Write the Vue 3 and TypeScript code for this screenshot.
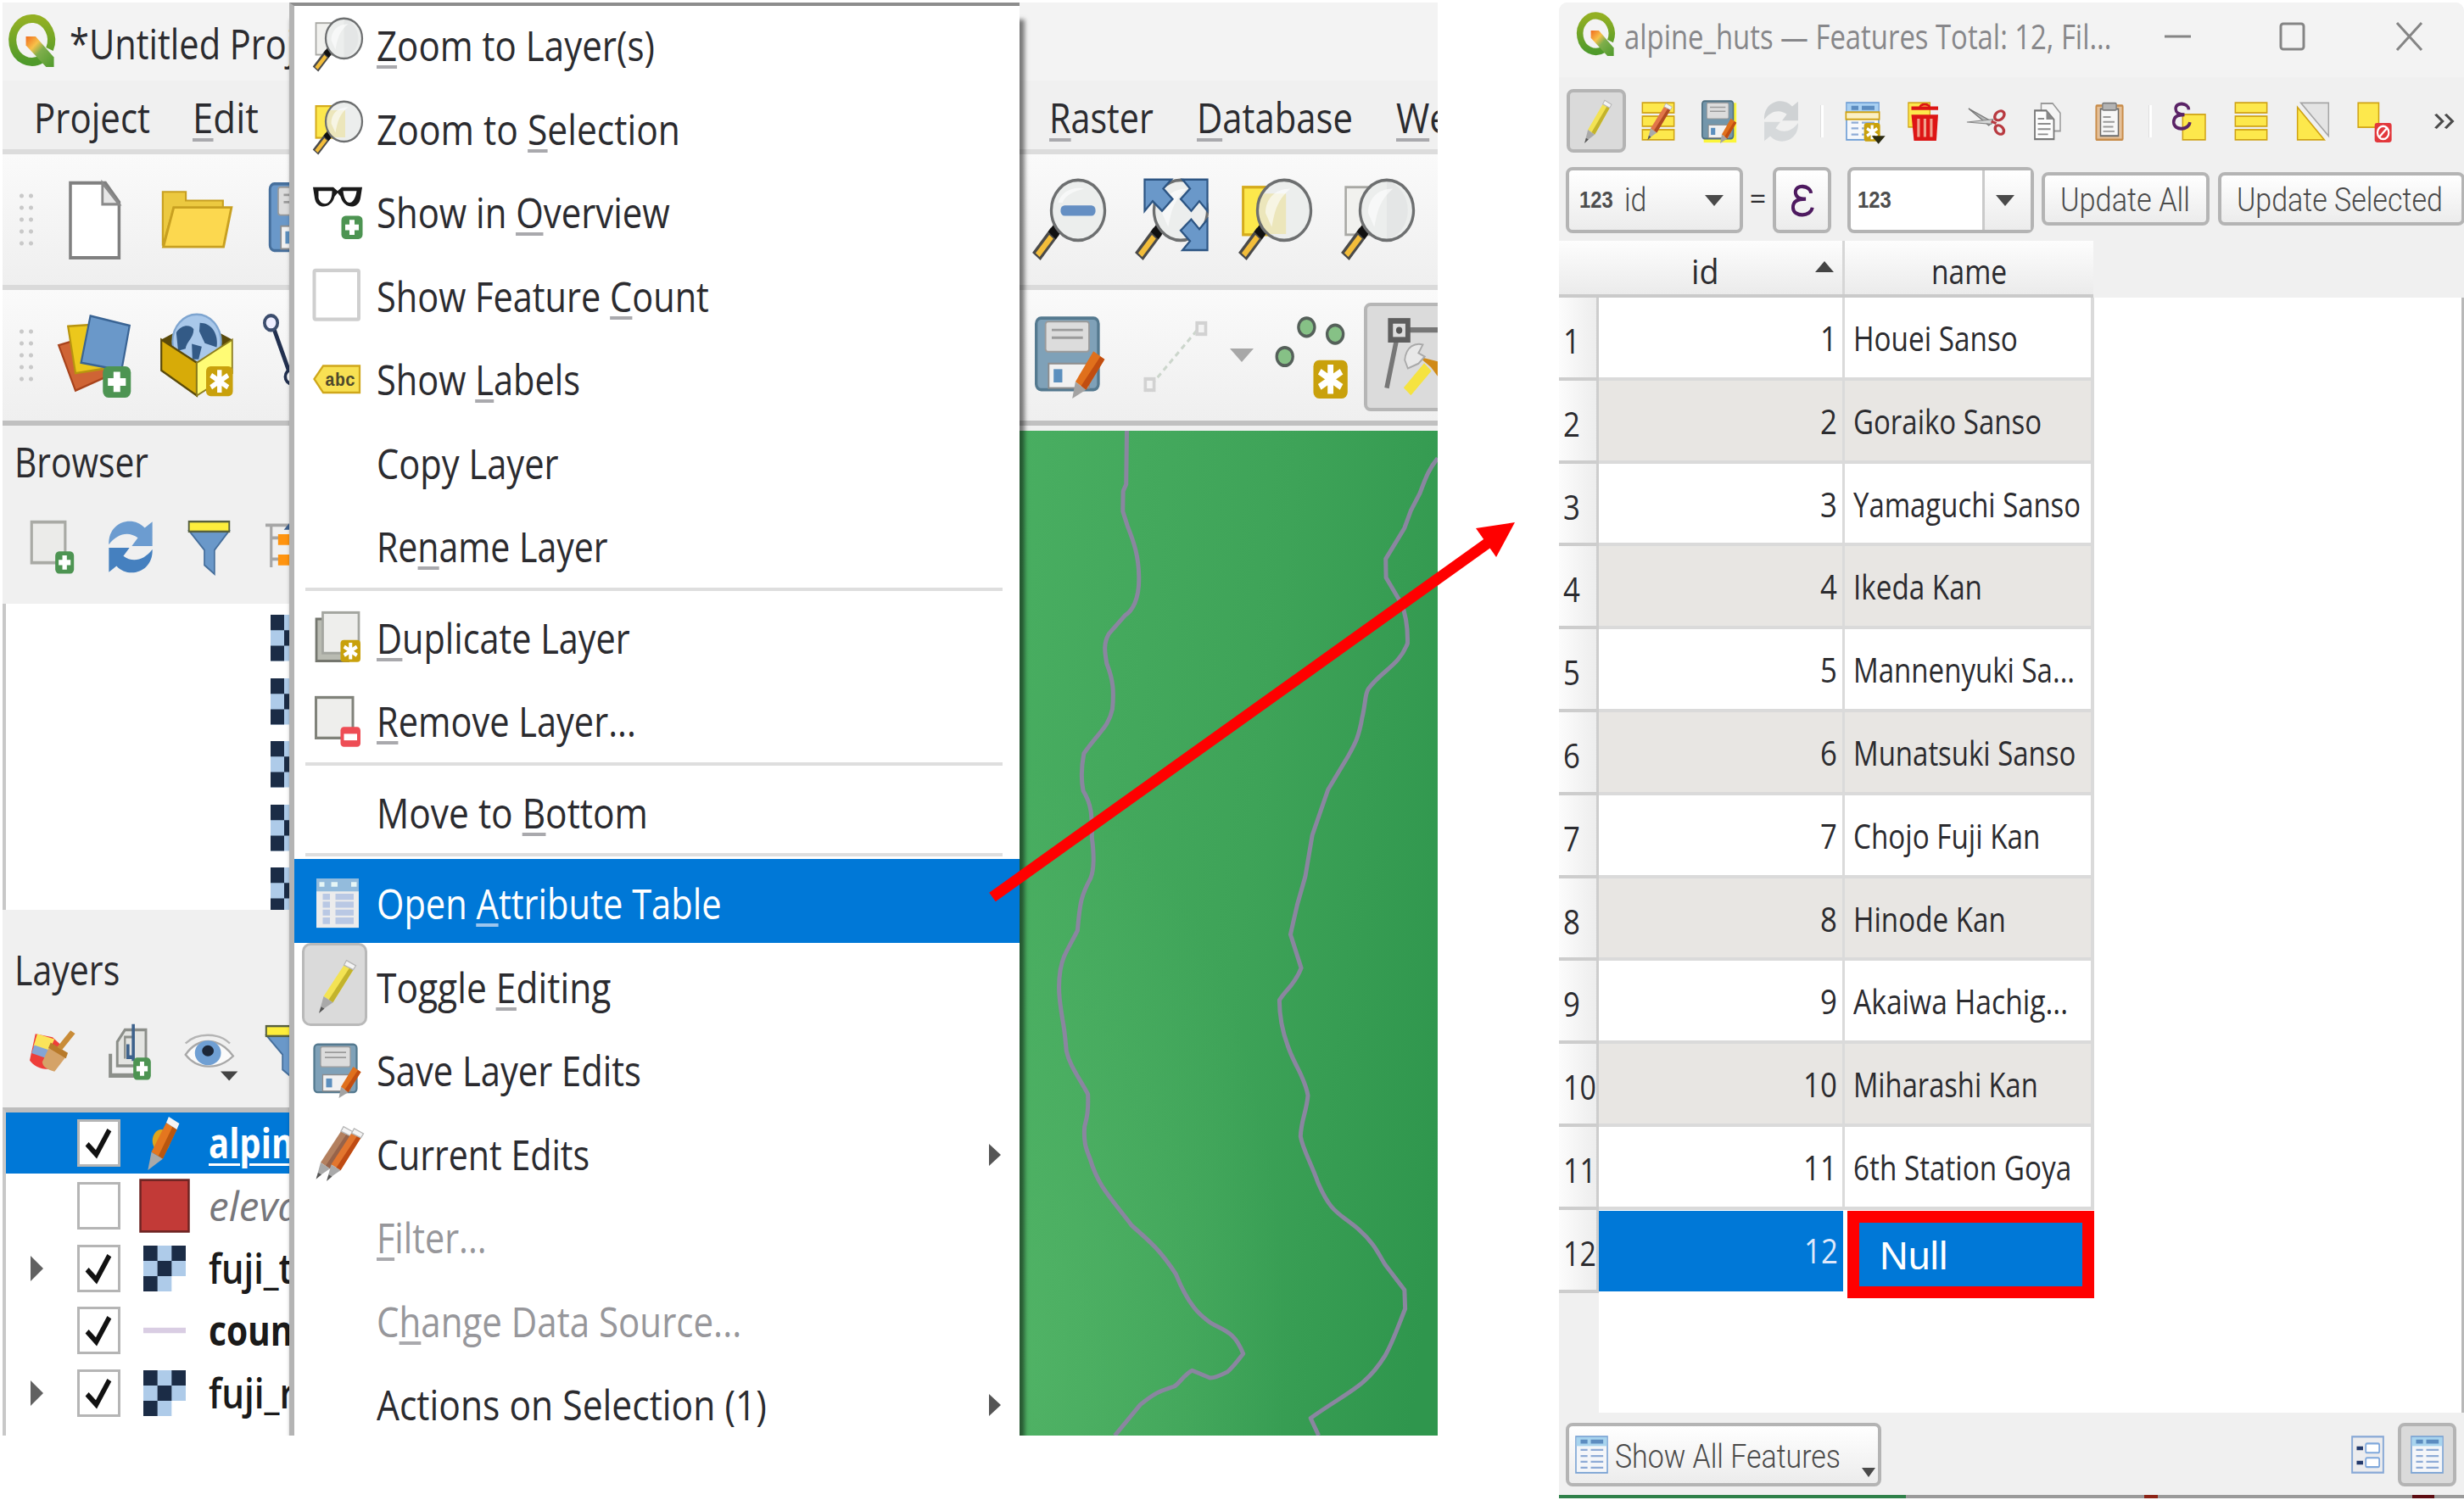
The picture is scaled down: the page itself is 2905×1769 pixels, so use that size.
<script setup lang="ts">
import type { Directive } from 'vue'

// Condenses or widens a label so that it takes exactly the given width.
const vFit: Directive<HTMLElement, number> = {
  mounted(el, { value }) {
    const natural = el.offsetWidth
    el.style.transform = `scaleX(${value / natural})`
    el.style.marginRight = `${value - natural}px`
  },
}

const parts = (label: string): string[] => {
  const i = label.indexOf('&')
  return i < 0 ? [label, '', ''] : [label.slice(0, i), label[i + 1], label.slice(i + 2)]
}

const lens = (rect: string, inner: string) =>
  `${rect}<path d="M7.6 15.2L1.6 22.4" stroke="#4a4a4a" stroke-width="3.4"/><path d="M6.4 16.8L2 22" stroke="#f3bd3a" stroke-width="1.7"/><path d="M9 13.6L6.6 16.4" stroke="#111" stroke-width="3.2"/><circle cx="15" cy="9.2" r="8.6" fill="#eceeed"/>${inner}<path d="M9 10C9 6 12 3 17 3C13 6 12 9 11 14Z" fill="#fff" opacity=".6"/><circle cx="15" cy="9.2" r="8.6" fill="none" stroke="#6d6f70" stroke-width=".9"/>`
const plus = (x: number, y: number, s: number, c = '#4d9452') =>
  `<rect x="${x}" y="${y}" width="${s}" height="${s}" rx="${s / 5}" fill="${c}"/><path d="M${x + s / 2} ${y + s * 0.18}v${s * 0.64}M${x + s * 0.18} ${y + s / 2}h${s * 0.64}" stroke="#fff" stroke-width="${s * 0.24}"/>`
const star = (x: number, y: number, s: number) =>
  `<rect x="${x}" y="${y}" width="${s}" height="${s}" rx="${s / 6}" fill="#c9a10c"/><path d="M${x + s / 2} ${y + s * 0.12}v${s * 0.76}M${x + s * 0.18} ${y + s * 0.3}l${s * 0.64} ${s * 0.4}M${x + s * 0.82} ${y + s * 0.3}l${-s * 0.64} ${s * 0.4}" stroke="#fff" stroke-width="${s * 0.17}"/>`
const pencil = (body: string, dark: string) =>
  `<path d="M16.2 3L20.6 5L11 19L6.6 16.4Z" fill="${body}"/><path d="M18.8 4.2L20.6 5L11 19L9 17.8Z" fill="${dark}"/><path d="M6.6 16.4L11 19L4.6 23Z" fill="#a9a9a9"/><path d="M5.4 20.8L7 21.6L4.4 23.6Z" fill="#555"/><path d="M16.2 3L17.4 1L21.8 3.2L20.6 5Z" fill="#f4f4f4" stroke="#b5b5b5" stroke-width=".5"/>`
const disk = (body: string, edge: string) =>
  `<rect x="1" y="1" width="20" height="20.5" rx="1.6" fill="${body}" stroke="${edge}" stroke-width=".9"/><rect x="4" y="2" width="14" height="8.6" rx=".8" fill="#dcdcdc" stroke="#9a9a9a" stroke-width=".5"/><path d="M6 4.4h10M6 6.6h10" stroke="#9b9b9b" stroke-width=".7"/><rect x="5" y="14" width="13" height="7" fill="#f1f1f1" stroke="#8d8d8d" stroke-width=".5"/><rect x="6.6" y="15.6" width="2.8" height="3.8" fill="#5b8fbe"/>`
const smallPencil =
  '<path d="M19.4 10.5L23 12.8L17 21.5L13.6 19.2Z" fill="#e0701c"/><path d="M21.6 12L23 12.8L17 21.5L15.4 20.4Z" fill="#c14d10"/><path d="M13.6 19.2L17 21.5L12.6 24Z" fill="#a3a3a3"/>'
const checker =
  '<path d="M0 0h24v16H16v8H0z" fill="#aecbe9"/><path d="M0 0h8v8H0zM16 0h8v8h-8zM8 8h8v8H8zM0 16h8v8H0z" fill="#1b2c46"/>'
const refresh = (a: string, b: string) =>
  `<path d="M.6 11C0 1 13-2.4 19.4 3.6L23.4 .8V11.6H12.6L15.8 8C11 5 5 6 .6 11Z" fill="${a}"/><path d="M23.4 13C24 23 11 26.4 4.6 20.4L.6 23.2V12.4H11.4L8.2 16C13 19 19 18 23.4 13Z" fill="${b}"/>`
const funnel =
  '<path d="M1 5L9.4 13.4V20L15 24V13.4L23 5Z" fill="#6a98c9" stroke="#466f9c" stroke-width=".8"/><rect x=".8" y=".8" width="22.4" height="4.4" fill="#fdee3c" stroke="#57603f" stroke-width=".9"/>'
const grid = (head: string, bg: string, line: string) =>
  `<rect x=".6" y=".6" width="22.8" height="22.8" fill="${bg}" stroke="${line}" stroke-width="1"/><rect x="1" y="1" width="22" height="5.6" fill="${head}"/><path d="M4 3.8h5M11.4 3.8h9" stroke="#5c8cc0" stroke-width="2.6"/><path d="M4 9h5M11.4 9h9M4 12.8h5M11.4 12.8h9M4 16.4h5M11.4 16.4h9M4 20.2h5M11.4 20.2h9" stroke="#8eabd6" stroke-width="1.2"/>`
const epsilon = 'M18.4 7.4C18 1.8 6.6 1 6.8 6.8C7 10.4 10 11.2 14.6 11.2C8 11.2 4.8 13 5 17.2C5.4 23.6 18.4 23.4 19.4 17'
const yellowBars =
  '<g fill="#fde84c" stroke="#cfa213" stroke-width=".9"><rect x=".8" y=".6" width="22.4" height="6.2"/><rect x=".8" y="8.9" width="22.4" height="6.2"/><rect x=".8" y="17.2" width="22.4" height="6.2"/></g>'

const icons: Record<string, string> = {
  qgis: '<defs><linearGradient id="qg" x1="0" y1="0" x2="0" y2="1"><stop offset="0" stop-color="#93b023"/><stop offset="1" stop-color="#4f9a2b"/></linearGradient><linearGradient id="qt" x1="0" y1="0" x2="1" y2="1"><stop offset="0" stop-color="#f06a1c"/><stop offset=".3" stop-color="#f7c14a"/><stop offset=".5" stop-color="#7fae4c"/><stop offset="1" stop-color="#4f9a2b"/></linearGradient></defs><path d="M17.5 20.2A10 10.2 0 1 1 21.6 15.6" fill="none" stroke="url(#qg)" stroke-width="4"/><path d="M9.4 9.6H14.4L23.8 19.4V24H19.8L9.4 13.8Z" fill="url(#qt)"/>',
  zoomLayer: lens('<rect x="1.8" y="2.6" width="13" height="13.6" fill="#f1f1ee" stroke="#a8a8a4" stroke-width=".7"/>', '<path d="M15 .8V17.6A8.6 8.6 0 0 0 15 .8" fill="#e4e6e6"/>'),
  zoomSelection: lens('<rect x="1.8" y="2.6" width="13" height="13.6" fill="#fde84c" stroke="#d5ab1c" stroke-width=".8"/>', '<path d="M8 4.4H15.6V16H10C5.6 12.4 5.8 8 8 4.4Z" fill="#ece6bb"/>'),
  zoomOut: lens('', '<rect x="9.4" y="7.8" width="11.2" height="3" rx="1.3" fill="#658fc3"/>').replace('M9 10C9 6 12 3 17 3C13 6 12 9 11 14Z', 'M8.6 7C9.6 4 13 2.4 17 3C13 4 11 5 10 7Z'),
  zoomFull: lens('', '') + '<g fill="#6a98c9" stroke="#2d5583" stroke-width=".6"><path d="M3.4.4H12L9.4 3L12.4 6L9 9.4L6 6.6L3.4 9.4Z"/><path d="M23.6.4H15.6L18 3L15 6L18.4 9.4L21 6.6L23.6 9.4Z"/><path d="M23.6 20.6H15.6L18 18L15 15L18.4 11.8L21 14.6L23.6 11.8Z"/></g>',
  overview: '<path d="M.4 1.4H10L12 3L14 1.4H23.6L22.8 6C22 11 15 11 13.4 5.4L12 3.8L10.6 5.4C9 11 2 11 1.2 6Z" fill="#1a1a1a"/><path d="M3 3H9.4C9.4 10 4 9.4 3 6ZM14.6 3H21C20 9.4 15.4 10 14.6 3Z" fill="#fff"/>' + plus(13.8, 13.6, 10),
  blank: '<rect x="1" y="1.4" width="21" height="21" rx=".6" fill="#fff" stroke="#cfcfcf" stroke-width="1.6"/>',
  labels: '<path d="M1 12L5.2 6.4H22.4V17.8H5.2Z" fill="#f8e153" stroke="#cfa71b" stroke-width=".9"/><text x="6" y="14.8" font-family="Liberation Mono" font-weight="700" font-size="8" fill="#4e4a2c">abc</text>',
  duplicate: '<path d="M2 4.4V22.4H17V4.4Z" fill="#b9bbb2" stroke="#74766e" stroke-width="1.1"/><rect x="5" y="1.6" width="17" height="17.4" fill="#eeeeec" stroke="#a4a6a0" stroke-width="1.1"/>' + star(13.4, 13.4, 9.4),
  remove: '<rect x="1.8" y="2" width="17.4" height="17.4" fill="#eeeeec" stroke="#80827a" stroke-width="1.2"/><rect x="13.4" y="14.6" width="9.4" height="8.6" rx="1.6" fill="#ee4d55"/><rect x="15" y="17.6" width="6.2" height="2.8" fill="#fff"/>',
  tableWhite: '<rect x="2" y="1.6" width="20" height="21" fill="#ececec"/><rect x="2" y="1.6" width="20" height="5.4" fill="#93bbdc"/><path d="M3.4 4h2.4M9 4h3M18.4 4h2.6" stroke="#e6f6f6" stroke-width="2"/><path d="M5 8h3.4v13H5zM11 8h8.6v13H11z" fill="#b9c8e4"/><path d="M3 11h18M3 14.4h18M3 17.8h18" stroke="#ececec" stroke-width=".8"/>',
  pencil: pencil('#f3e353', '#c3b32c'),
  saveEdits: disk('#7fa1b8', '#54798f') + smallPencil,
  save: disk('#6a98c9', '#466f9c'),
  pencils: '<g transform="translate(-2.6 -.4)">' + pencil('#b3805f', '#96634a') + '</g><g transform="translate(2.4 .4)">' + pencil('#e2762e', '#bf4b13') + '</g>',
  newDoc: '<path d="M4 1.2H15.8L20.4 6.8V23H4Z" fill="#fff" stroke="#808080" stroke-width="1"/><path d="M14.8 1.2V7.4H20.4Z" fill="#e6e6e6" stroke="#8a8a8a" stroke-width=".8"/>',
  folder: '<path d="M.8 21V2.4H8.4V5.4H20.6V8H4.4Z" fill="#ecc940" stroke="#c8a021" stroke-width=".6"/><path d="M4.4 7.8H23.4L20.8 21.4H1Z" fill="#fcd84f" stroke="#c8a021" stroke-width=".8"/>',
  layers: '<path d="M.6 9L12 6L17 17.6L6 22Z" fill="#cf6435" stroke="#a8431c" stroke-width=".6"/><path d="M3.6 3.6L14 3L16 15.6L6 17Z" fill="#ecc81c" stroke="#b89410" stroke-width=".6"/><path d="M10.8.6L23.4 3.4L20.8 16.2L7.8 14Z" fill="#6a98c9" stroke="#3a6494" stroke-width=".6"/>' + plus(14.8, 15, 9),
  geopackage: '<path d="M.6 7.4L12 2L23.4 7.4V17L12 23.4L.6 16.2Z" fill="#5a4a0a"/><circle cx="12" cy="8" r="7.8" fill="#a9c8ea" stroke="#7ea5d0" stroke-width=".6"/><path d="M5.4 5.4C7 3 10 3 11 4.4C11 7 8.6 8 8.4 10L6 10.6ZM13 2.6C17 2.6 19 6 18.4 9.6L14.6 8.4L12.8 5ZM10.4 8.6L13.6 9.4L12.6 13H10.6Z" fill="#335a86"/><path d="M.6 7.4L12 14V23.4L.6 16.2Z" fill="#d7ab08" stroke="#5a4a0a" stroke-width=".6"/><path d="M23.4 7.4L12 14V23.4L23.4 17Z" fill="#fffb75" stroke="#8d7d1c" stroke-width=".5"/>' + star(15, 15, 8.6),
  vertexLine: '<path d="M3 3L9 18" stroke="#22304f" stroke-width="1.3"/><circle cx="2.6" cy="2.6" r="2.1" fill="#eef" stroke="#3c4d6d" stroke-width="1"/><circle cx="9.2" cy="18" r="2" fill="#fff" stroke="#22304f" stroke-width="1"/>',
  digitize: '<path d="M4 20L18.5 4.6" stroke="#ccd6cc" stroke-width=".8" stroke-dasharray="1.6 1.2"/><g fill="#f3f3f3" stroke="#d2d2d2" stroke-width="1"><rect x="2" y="18.4" width="2.8" height="3.2"/><rect x="18.6" y="2.4" width="2.8" height="3.2"/></g>',
  points: '<g fill="#86c186" stroke="#55605a" stroke-width=".9"><circle cx="10.2" cy="3.6" r="2.6"/><circle cx="19.4" cy="5.6" r="2.6"/><circle cx="3.2" cy="12" r="2.6"/></g>' + star(12.4, 13, 11),
  vertexTool: '<path d="M5 4.4H24M4 7L.8 21" stroke="#777" stroke-width="1.5"/><rect x="2" y="1.8" width="5.6" height="5.4" fill="#ddd" stroke="#5e5e5e" stroke-width="1.6"/><circle cx="4.8" cy="4.5" r="1" fill="#555"/><path d="M11 12L15 15L20 21V14Z" fill="#d08a17"/><path d="M6.6 13C7 9 10 8 12.4 8.6L11 11L13 12L11 14L7.6 15.4Z" fill="#e8e8e8" stroke="#a9a9a9" stroke-width=".5"/><path d="M14 15L7.4 22" stroke="#f5e340" stroke-width="3.2"/>',
  addBox: '<rect x="1" y="1" width="17.6" height="18" fill="#ebebe9" stroke="#a9aaa5" stroke-width="1.4"/>' + plus(13.4, 14, 9.8),
  refresh: refresh('#6c9cd0', '#4580bf'),
  refreshGrey: refresh('#cfd2d4', '#d6d9db'),
  funnel,
  halfFunnel: funnel,
  tree: '<path d="M0 2.4H24M3 2V21M3 8H8M3 17.4H8" stroke="#a6a6a6" stroke-width="1.4" fill="none"/><path d="M6.6 6.4h9v4.8h-9zM6.6 15.4h9v4.8h-9z" fill="#ff9410"/><path d="M9.6 4.4l6-6v6z" fill="#3c5f8c"/>',
  checker,
  brush: '<path d="M3 2L12 4L17 9L10 22C5 22 2 20 0 17Z" fill="#ee3e3a"/><path d="M4 2L13 5L10 12L2 9Z" fill="#fbe45a"/><path d="M2.4 8.4L11 11.5L9 16L1 13Z" fill="#85a5d4"/><path d="M10 10L19 15L13 23.4C9 22 7 21 6.6 18Z" fill="#d5a368"/><path d="M11 7L20 12.8L19 16L9.8 10Z" fill="#b87a2a"/><path d="M15.6 10.4L22.6 1" stroke="#c98c38" stroke-width="3"/>',
  addGroup: '<path d="M1.4 13V22H14" fill="none" stroke="#8c8f8a" stroke-width="1.8"/><path d="M5 18V8L9 3H20V18Z" fill="#e3e4e1" stroke="#8c8f8a" stroke-width="1.3"/><path d="M9 15V6H14" fill="none" stroke="#8c8f8a" stroke-width="1"/><path d="M13.4 16V.6M10.6 9V14.4H14" stroke="#3d628c" stroke-width="1.6" fill="none"/>' + plus(13.4, 14.6, 9.2),
  eye: '<path d="M1 10.8C6 3 15 2 21.4 11.4C15 18 6 17.6 1 10.8Z" fill="#fafafa" stroke="#a8a8a8" stroke-width=".9"/><path d="M1 5.6C6 .6 15 .6 20 5.6" fill="none" stroke="#b4b4b4" stroke-width=".9"/><circle cx="10.6" cy="10" r="5.6" fill="#6f9fd3"/><circle cx="10.6" cy="9" r="2.5" fill="#1c2738"/><path d="M16 18.4H23.4L19.7 22.6Z" fill="#444"/>',
  layerPencil: '<circle cx="11.6" cy="11" r="5" fill="#e0a41c"/><path d="M14.4 3L20.4 6L12.4 19L6 16Z" fill="#e4761f"/><path d="M18 4.8L20.4 6L12.4 19L10 17.6Z" fill="#b9560f"/><path d="M6 16L12.4 19L4 24Z" fill="#a9a9a9"/><path d="M14.4 3L15.8.4L21.8 3.4L20.4 6Z" fill="#f4f4f4"/>',
  redFill: '<rect x=".6" y=".6" width="22.8" height="22.8" fill="#c23a37" stroke="#6e2423" stroke-width="1"/>',
  lineSymbol: '<path d="M0 12H24" stroke="#d9cde3" stroke-width="2.8"/>',
  multiEdit: yellowBars + pencil('#e2764a', '#b04a22'),
  saveYellow: '<rect x="2" y="2" width="21" height="21.6" fill="#fbf53a"/>' + disk('#7396ab', '#4f6f80') + smallPencil,
  newTable: grid('#a9d0f2', '#f6f8fb', '#6f9fd6') + '<rect x=".2" y="6.4" width="23.6" height="4.4" fill="#fbf0c4" stroke="#cfa213" stroke-width="1"/>' + star(13, 13, 11.4) + '<path d="M18.4 21H28L23.2 26Z" fill="#2b2b12"/>',
  trash: '<rect x=".6" y=".6" width="17" height="15" fill="#fde84c" stroke="#cfa213" stroke-width=".8"/><path d="M3 8H24L22.6 24H5Z" fill="#dd1515"/><path d="M3 4H24" stroke="#dd1515" stroke-width="2.2"/><path d="M9.6 3.6C10 1 17 1 17.4 3.6" fill="none" stroke="#dd1515" stroke-width="1.5"/><path d="M8.6 10.4V21.6M13.6 10.4V21.6M18.6 10.4V21.6" stroke="#f0a08c" stroke-width="2.1"/>',
  cut: '<path d="M1 3L16 12.6L13.4 15Z" fill="#b5b7b7" stroke="#777" stroke-width=".7"/><path d="M0 12.6L16 10.6L15 14Z" fill="#d4d6d6" stroke="#888" stroke-width=".7"/><g fill="none" stroke="#b83a40" stroke-width="1.8"><path d="M15 12L18 13.6"/><ellipse cx="20" cy="8" rx="2.6" ry="3.6" transform="rotate(35 20 8)"/><ellipse cx="20" cy="18" rx="2.4" ry="3.4" transform="rotate(-30 20 18)"/></g>',
  copy: '<path d="M7 1H16L22 7V18H7Z" fill="#f4f4f4" stroke="#9a9a9a" stroke-width="1"/><path d="M2 5.4H11L17 11V23H2Z" fill="#fdfdfd" stroke="#777" stroke-width="1.2"/><path d="M11 5.4V11H17Z" fill="#888"/><path d="M4.4 10.4h5M4.4 13.6h10M4.4 16.8h10M4.4 20h8" stroke="#8c8c8c" stroke-width="1"/>',
  paste: '<rect x="1.6" y="2.4" width="20.8" height="21" rx=".6" fill="#e5c19a" stroke="#c88c4a" stroke-width="1.3"/><path d="M5 4.4H19V21H5Z" fill="#f7f7f7" stroke="#6c6c6c" stroke-width="1"/><path d="M7 9.4h6M7 12.4h9M7 15.4h8M7 18.2h9" stroke="#999" stroke-width="1"/><rect x="6.6" y=".8" width="10.8" height="4.4" rx=".8" fill="#b4b4b4" stroke="#7c7c7c" stroke-width=".9"/>',
  selectExpr: '<rect x="7.4" y="7.8" width="16" height="15.6" fill="#fde84c" stroke="#cfa213" stroke-width=".9"/><path d="' + epsilon + '" transform="translate(-3 -1) scale(.8)" fill="none" stroke="#5a2366" stroke-width="2.6"/>',
  selectAll: yellowBars,
  invert: '<path d="M1 3.4V23.4H20Z" fill="#fde84c" stroke="#cfa213" stroke-width=".9"/><path d="M3.4.7H23V21Z" fill="#e4e4e4" stroke="#a5a5a5" stroke-width=".9"/>',
  deselect: '<rect x=".7" y=".7" width="14.6" height="15" fill="#fde84c" stroke="#cfa213" stroke-width=".9"/><rect x="12.4" y="13" width="12" height="12" rx="1.6" fill="#e2383c"/><circle cx="18.4" cy="19" r="4" fill="none" stroke="#fff" stroke-width="1.3"/><path d="M15.8 21.6L21 16.4" stroke="#fff" stroke-width="1.3"/>',
  more: '<path d="M3 3L10 12L3 21M13 3L20 12L13 21" fill="none" stroke="#4c4c4c" stroke-width="3"/>',
  epsilon: '<path d="' + epsilon + '" fill="none" stroke="#4e1a60" stroke-width="2.5"/>',
  grid: grid('#a8d4ee', '#f4f6f9', '#7ba4d4'),
  form: '<rect x=".7" y=".7" width="22.6" height="22.6" fill="#ececee" stroke="#88a9d6" stroke-width="1.2"/><path d="M4 8h4.6M4 17h4.6" stroke="#23396b" stroke-width="2.4"/><g fill="#fff" stroke="#7fa8dc" stroke-width="1.1"><rect x="10.6" y="5" width="9.8" height="5.8" rx="1"/><rect x="10.6" y="14" width="9.8" height="5.8" rx="1"/></g>',
}

interface MenuItem { label?: string; width?: number; icon?: string; state?: string; sub?: boolean }
const menu: MenuItem[] = [
  { label: '&Zoom to Layer(s)', width: 328, icon: 'zoomLayer' },
  { label: 'Zoom to &Selection', width: 358, icon: 'zoomSelection' },
  { label: 'Show in &Overview', width: 346, icon: 'overview' },
  { label: 'Show Feature &Count', width: 392, icon: 'blank' },
  { label: 'Show &Labels', width: 240, icon: 'labels' },
  { label: 'Copy Layer', width: 215 },
  { label: 'Re&name Layer', width: 273 },
  {},
  { label: '&Duplicate Layer', width: 299, icon: 'duplicate' },
  { label: '&Remove Layer...', width: 306, icon: 'remove' },
  {},
  { label: 'Move to &Bottom', width: 320 },
  {},
  { label: 'Open &Attribute Table', width: 407, icon: 'tableWhite', state: 'active' },
  { label: 'Toggle &Editing', width: 276, icon: 'pencil', state: 'checked' },
  { label: 'Save Layer Edits', width: 312, icon: 'saveEdits' },
  { label: 'Current Edits', width: 251, icon: 'pencils', sub: true },
  { label: '&Filter...', width: 130, state: 'disabled' },
  { label: 'C&hange Data Source...', width: 430, state: 'disabled' },
  { label: 'Actions on Selection (1)', width: 460, sub: true },
]

const layers = [
  { name: 'alpin', width: 100, icon: 'layerPencil', checked: true, expand: false, kind: 'selected' },
  { name: 'eleva', width: 108, icon: 'redFill', checked: false, expand: false, kind: 'off' },
  { name: 'fuji_t', width: 99, icon: 'checker', checked: true, expand: true, kind: '' },
  { name: 'coun', width: 100, icon: 'lineSymbol', checked: true, expand: false, kind: 'bold' },
  { name: 'fuji_r', width: 102, icon: 'checker', checked: true, expand: true, kind: '' },
]

const tools: string[][] = [
  ['pencil', 'multiEdit', 'saveYellow', 'refreshGrey'],
  ['newTable', 'trash', 'cut', 'copy', 'paste'],
  ['selectExpr', 'selectAll', 'invert', 'deselect'],
]

const huts = [
  { name: 'Houei Sanso', width: 194 },
  { name: 'Goraiko Sanso', width: 222 },
  { name: 'Yamaguchi Sanso', width: 268 },
  { name: 'Ikeda Kan', width: 152 },
  { name: 'Mannenyuki Sa...', width: 261 },
  { name: 'Munatsuki Sanso', width: 262 },
  { name: 'Chojo Fuji Kan', width: 220 },
  { name: 'Hinode Kan', width: 180 },
  { name: 'Akaiwa Hachig...', width: 253 },
  { name: 'Miharashi Kan', width: 218 },
  { name: '6th Station Goya', width: 257 },
]
</script>

<template>
  <div class="page">
    <section class="main">
      <div class="title-row">
        <svg class="logo" viewBox="0 0 24 24" preserveAspectRatio="none" v-html="icons.qgis" />
        <span v-fit="266" class="txt">*Untitled Proj</span>
      </div>
      <div class="menu-bar">
        <div class="bar-left">
          <span v-fit="137" class="txt">Project</span>
          <span v-fit="78" class="txt"><u>E</u>dit</span>
        </div>
        <div class="bar-right">
          <span v-fit="123" class="txt"><u>R</u>aster</span>
          <span v-fit="184" class="txt"><u>D</u>atabase</span>
          <span v-fit="63" class="txt"><u>W</u>e</span>
        </div>
      </div>
      <div class="toolbar">
        <i class="handle" />
        <div class="cells left">
          <span v-for="n in ['newDoc', 'folder', 'save']" :key="n" class="cell"><svg :class="['big', n]" viewBox="0 0 24 24" preserveAspectRatio="none" v-html="icons[n]" /></span>
        </div>
        <div class="cells right">
          <span v-for="n in ['zoomOut', 'zoomFull', 'zoomSelection', 'zoomLayer']" :key="n" class="cell"><svg class="big" viewBox="0 0 24 24" preserveAspectRatio="none" v-html="icons[n]" /></span>
        </div>
      </div>
      <div class="toolbar second">
        <i class="handle" />
        <div class="cells left">
          <span v-for="n in ['layers', 'geopackage', 'vertexLine']" :key="n" class="cell"><svg :class="['big', n]" viewBox="0 0 24 24" preserveAspectRatio="none" v-html="icons[n]" /></span>
        </div>
        <div class="cells right">
          <span v-for="n in ['saveEdits', 'digitize']" :key="n" :class="['cell', n]"><svg class="big" viewBox="0 0 24 24" preserveAspectRatio="none" v-html="icons[n]" /></span>
          <i class="drop" />
          <span class="cell"><svg class="big" viewBox="0 0 24 24" preserveAspectRatio="none" v-html="icons.points" /></span>
          <span class="pressed-tool"><svg class="big" viewBox="0 0 24 24" preserveAspectRatio="none" v-html="icons.vertexTool" /></span>
        </div>
      </div>
      <div class="work">
        <div class="docks">
          <div class="dock-title browser"><span v-fit="158" class="txt">Browser</span></div>
          <div class="dock-tools">
            <svg v-for="n in ['addBox', 'refresh', 'funnel', 'tree']" :key="n" :class="n" viewBox="0 0 24 24" preserveAspectRatio="none" v-html="icons[n]" />
          </div>
          <div class="browser-tree">
            <svg v-for="n in 5" :key="n" viewBox="0 0 24 24" preserveAspectRatio="none" v-html="icons.checker" />
          </div>
          <div class="dock-title lay"><span v-fit="124" class="txt">Layers</span></div>
          <div class="dock-tools second">
            <svg v-for="n in ['brush', 'addGroup', 'eye', 'halfFunnel']" :key="n" :class="n" viewBox="0 0 24 24" preserveAspectRatio="none" v-html="icons[n]" />
          </div>
          <div class="layer-tree">
            <div v-for="l in layers" :key="l.name" :class="['layer', l.kind]">
              <i :class="['expander', { shown: l.expand }]" />
              <span class="box"><svg v-if="l.checked" viewBox="0 0 24 24" preserveAspectRatio="none"><path d="M4.6 12.6L10.4 18.4L18.6 4.6" fill="none" stroke="#111" stroke-width="3" /></svg></span>
              <span class="symbol"><svg :class="l.icon" viewBox="0 0 24 24" preserveAspectRatio="none" v-html="icons[l.icon]" /></span>
              <span v-fit="l.width" class="txt">{{ l.name }}</span>
            </div>
          </div>
        </div>
        <svg class="map" viewBox="30 23 1247 1498" preserveAspectRatio="none">
          <path d="M350 23L348 103L339 113L338 143L352 165C372 190 385 210 386 240C388 275 365 292 345 298L296 326C280 340 284 352 290 370C310 395 312 412 307 438C295 465 270 470 222 504C212 530 214 545 220 560C245 580 246 595 246 630C255 665 250 680 242 690C215 715 210 725 203 768C170 800 160 805 152 826C144 850 148 870 158 900C166 920 168 940 170 948C180 970 205 985 234 1012C236 1040 230 1048 224 1060C220 1085 230 1095 240 1108C265 1150 300 1165 365 1208C420 1232 450 1245 496 1280C540 1335 580 1345 600 1353C640 1365 670 1365 697 1399C680 1410 665 1420 650 1426C615 1435 605 1435 598 1435L545 1424C520 1430 505 1445 490 1448C450 1455 440 1455 390 1475L314 1521" />
          <path d="M1277 64C1250 80 1240 95 1224 116L1197 142L1178 168L1122 214L1123 242L1168 280C1185 300 1188 320 1187 340C1160 375 1110 380 1070 408C1060 415 1062 430 1052 450C1042 480 1030 490 1010 508L950 558L903 626L882 688L858 730L838 774L870 824C850 850 825 855 805 872C805 900 815 920 830 940C850 970 880 985 890 1014C885 1040 870 1050 868 1075C875 1095 900 1115 920 1144C960 1190 980 1188 1040 1213C1090 1235 1100 1250 1120 1266L1178 1304L1180 1332C1150 1370 1140 1385 1120 1402C1060 1450 1010 1455 898 1495L922 1521" />
        </svg>
      </div>
      <div class="context-menu">
        <div class="items">
          <template v-for="(m, i) in menu" :key="i">
            <div v-if="!m.label" class="rule" />
            <div v-else :class="['item', m.state]">
              <span class="slot"><svg v-if="m.icon" viewBox="0 0 24 24" preserveAspectRatio="none" v-html="icons[m.icon]" /></span>
              <span v-fit="m.width!" class="txt">{{ parts(m.label)[0] }}<u v-if="parts(m.label)[1]">{{ parts(m.label)[1] }}</u>{{ parts(m.label)[2] }}</span>
              <i v-if="m.sub" class="sub" />
            </div>
          </template>
        </div>
      </div>
    </section>

    <section class="table-window">
      <div class="win-title">
        <svg class="logo" viewBox="0 0 24 24" preserveAspectRatio="none" v-html="icons.qgis" />
        <span v-fit="574" class="txt">alpine_huts — Features Total: 12, Fil...</span>
        <svg class="controls" viewBox="0 0 304 34"><path d="M0 17H31M274 1L303 33M303 1L274 33" /><rect x="137" y="2" width="27" height="30" rx="3" /></svg>
      </div>
      <div class="tools">
        <template v-for="(g, gi) in tools" :key="gi">
          <i v-if="gi" class="vsep" />
          <span v-for="n in g" :key="n" :class="['tool', n]"><svg viewBox="0 0 24 24" preserveAspectRatio="none" v-html="icons[n]" /></span>
        </template>
        <svg class="more" viewBox="0 0 24 24" preserveAspectRatio="none" v-html="icons.more" />
      </div>
      <div class="form">
        <div class="combo field"><b v-fit="40" class="num">123</b><span v-fit="26" class="thin">id</span><i class="caret" /></div>
        <span class="equals">=</span>
        <div class="combo expr"><svg viewBox="0 0 24 24" preserveAspectRatio="none" v-html="icons.epsilon" /></div>
        <div class="combo value"><b v-fit="40" class="num">123</b><span class="arrow-part"><i class="caret" /></span></div>
        <div class="push all"><span v-fit="153" class="thin">Update All</span></div>
        <div class="push sel"><span v-fit="243" class="thin">Update Selected</span></div>
      </div>
      <div class="head">
        <div class="h-id"><span v-fit="33" class="txt">id</span><i class="sort" /></div>
        <div class="h-name"><span v-fit="89" class="txt">name</span></div>
      </div>
      <div class="body">
        <div class="nums">
          <div v-for="n in 12" :key="n" class="rn"><span v-fit="n > 9 ? 39 : 20" class="txt">{{ n }}</span></div>
        </div>
        <div class="grid">
          <div v-for="(h, i) in huts" :key="h.name" class="row">
            <div class="c-id"><span v-fit="i > 8 ? 40 : 20" class="txt">{{ i + 1 }}</span></div>
            <div class="c-name"><span v-fit="h.width" class="txt">{{ h.name }}</span></div>
          </div>
          <div class="row last">
            <div class="c-id"><span v-fit="40" class="txt">12</span></div>
            <div class="null"><span v-fit="80">Null</span></div>
          </div>
        </div>
      </div>
      <div class="foot">
        <div class="filter">
          <svg viewBox="0 0 24 24" preserveAspectRatio="none" v-html="icons.grid" />
          <span v-fit="266" class="thin">Show All Features</span>
          <i class="caret small" />
        </div>
        <div class="views">
          <svg viewBox="0 0 24 24" preserveAspectRatio="none" v-html="icons.form" />
          <span class="view-on"><svg viewBox="0 0 24 24" preserveAspectRatio="none" v-html="icons.grid" /></span>
        </div>
      </div>
      <div class="strip"><i class="green" /><i class="red one" /><i class="red two" /></div>
    </section>

    <svg class="pointer" viewBox="0 0 640 460">
      <path d="M15 448L608 24" stroke="#f00" stroke-width="13" />
      <path d="M631 6L585 13L609 47Z" fill="#f00" />
    </svg>
  </div>
</template>

<style>
body { margin: 0; background: #fff; }
</style>

<style scoped>
.page { position: relative; width: 2905px; height: 1769px; overflow: hidden; background: #fff; display: flex; align-items: flex-start; font-family: "Open Sans", "Noto Sans", sans-serif; color: #2b2b2f; }
.page * { box-sizing: border-box; }
svg { display: block; flex: none; overflow: visible; }
.txt, .thin, .num { display: inline-block; flex: none; white-space: pre; transform-origin: 0 50%; }
.null span { display: inline-block; transform-origin: 0 50%; }
i { font-style: normal; display: block; flex: none; }
u { text-decoration: none; position: relative; }
u::after { content: ""; position: absolute; left: 0; right: 0; bottom: 5px; height: 4px; background: #a9a9ad; }

.main { position: relative; width: 1692px; height: 1690px; margin: 3px 0 0 3px; flex: none; overflow: hidden; background: #f0f0f0; display: flex; flex-direction: column; font-size: 50px; }
.title-row { height: 92px; flex: none; background: #f3f3f3; display: flex; line-height: 97px; }
.title-row .logo { width: 55px; height: 60px; margin: 16px 18px 0 6px; }
.menu-bar { height: 87px; flex: none; display: flex; border-bottom: 6px solid #dcdcdc; line-height: 87px; }
.bar-left { display: flex; width: 1234px; padding-left: 37px; gap: 50px; flex: none; }
.bar-right { display: flex; gap: 51px; flex: 1; min-width: 0; overflow: hidden; }
.toolbar { height: 160px; flex: none; display: flex; align-items: center; background: linear-gradient(#fafafa, #efefef); border-bottom: 6px solid #dadada; }
.toolbar.second { border-bottom-color: #c0c0c0; }
.handle { width: 20px; height: 70px; margin-left: 17px; background-image: radial-gradient(circle, #c9c9c9 2px, transparent 3px); background-size: 11px 14px; }
.cells { display: flex; align-items: center; }
.cells.left { width: 1149px; margin-left: 10px; flex: none; }
.cell { width: 121.5px; flex: none; display: flex; justify-content: center; }
.cells.right { flex: 1; min-width: 0; }
.second .cells.right { padding-left: 2px; }
.big { width: 88px; height: 99px; }
.big.newDoc { width: 84px; height: 97px; }
.big.folder { width: 86px; height: 82px; }
.big.save { width: 78px; height: 92px; }
.second .cells.right .cell { padding-top: 3px; }
.second .cell.digitize { padding-left: 8px; }
.drop { border: 14px solid transparent; border-top: 16px solid #a8a8a8; border-bottom: 0; margin: 0 8px 0 6px; }
.pressed-tool { width: 120px; height: 128px; margin-top: 3px; border: 4px solid #b6b6b6; border-radius: 8px; background: #dbdbdb; display: flex; align-items: center; padding-left: 20px; flex: none; }

.work { flex: 1; display: flex; min-height: 0; }
.docks { width: 1199px; flex: none; display: flex; flex-direction: column; }
.dock-title { padding-left: 14px; line-height: 60px; font-size: 50px; flex: none; }
.browser { height: 111px; padding-top: 12px; }
.dock-tools { display: flex; height: 99px; gap: 38px; padding-left: 32px; align-items: flex-start; flex: none; }
.dock-tools svg { width: 54px; height: 64px; }
.dock-tools .funnel { width: 51px; margin-left: 2px; }
.dock-tools .tree { margin-left: 3px; }
.browser-tree { height: 361px; flex: none; background: #fff; border-left: 4px solid #c8c8c8; padding: 13px 0 0 312px; display: flex; flex-direction: column; gap: 20px; overflow: hidden; }
.browser-tree svg { width: 48px; height: 54.6px; }
.lay { height: 133px; padding-top: 40px; }
.dock-tools.second { height: 100px; gap: 38px; }
.dock-tools.second .brush { height: 50px; margin-top: 9px; }
.dock-tools.second .addGroup { height: 68px; }
.dock-tools.second .eye { width: 66px; height: 62px; margin-top: 10px; margin-left: -3px; }
.dock-tools.second .halfFunnel { margin-left: -8px; margin-top: 2px; }
.layer-tree { flex: 1; background: #fff; border-left: 4px solid #c8c8c8; border-top: 6px solid #bdbdbd; }
.layer { height: 73.8px; display: flex; align-items: center; line-height: 72px; font-size: 48px; color: #1a1a1a; font-weight: 600; }
.layer.selected { background: #0078d7; height: 72px; margin-bottom: 1px; color: #fff; font-weight: 700; text-decoration: underline; text-decoration-thickness: 3px; text-underline-offset: 6px; }
.layer.off { color: #77777c; font-style: italic; font-weight: 400; }
.layer.bold { font-weight: 700; }
.expander { width: 0; height: 0; margin: 0 40px 0 29px; border: 15px solid transparent; border-right: 0; }
.expander.shown { border-left-color: #616161; }
.box { width: 51px; height: 56px; border: 3px solid #b5b5b5; background: #fff; flex: none; }
.box svg { width: 45px; height: 50px; }
.symbol { width: 104px; height: 66px; display: flex; align-items: center; justify-content: center; flex: none; }
.symbol svg { width: 50px; height: 54px; }
.symbol .redFill { width: 60px; height: 64px; }
.symbol .layerPencil { width: 50px; height: 64px; margin-right: 6px; }

.map { width: 493px; height: 1185px; margin-top: 6px; overflow: hidden; background: radial-gradient(ellipse at 0% 92%, rgba(90, 186, 108, .55), transparent 45%), linear-gradient(97deg, #49ae61, #3ea358 52%, #2f964d 95%); }
.map path { fill: none; stroke: #8a86a0; stroke-width: 5; vector-effect: non-scaling-stroke; stroke-linejoin: round; }

.context-menu { position: absolute; left: 338px; top: 0; width: 861px; height: 1690px; background: #fff; border-left: 6px solid #b4b4b4; border-top: 4px solid #8d8d8d; box-shadow: 4px 22px 5px 2px rgba(0, 0, 0, .5); font-size: 49px; overflow: hidden; }
.items { margin-top: -6px; }
.item { height: 98.5px; display: flex; align-items: flex-start; line-height: 105px; margin-left: -6px; padding-left: 15px; position: relative; }
.item.active { background: #0078d7; color: #fff; }
.item.active u::after { background: #9cc6ee; }
.item.disabled { color: #97979b; }
.slot { width: 77px; height: 98px; margin-right: 11px; display: flex; align-items: center; justify-content: center; border-radius: 10px; padding-left: 6px; flex: none; }
.slot svg { width: 60px; height: 66px; margin-top: 5px; }
.item.checked .slot { background: #dadada; border: 3px solid #b9b9b9; padding-left: 0; }
.sub { position: absolute; right: 22px; top: 40px; border: 13px solid transparent; border-left: 14px solid #555; border-right: 0; }
.rule { height: 9px; padding-top: 2px; margin: 0 20px 0 13px; }
.rule::before { content: ""; display: block; height: 4px; background: #dedede; }

.table-window { width: 1067px; height: 1764px; margin: 3px 0 0 143px; flex: none; background: #f0f0f0; overflow: hidden; display: flex; flex-direction: column; font-size: 40px; border-radius: 10px 10px 0 0; }
.win-title { height: 88px; flex: none; background: #f3f3f3; display: flex; line-height: 79px; color: #87878a; }
.win-title .logo { width: 45px; height: 50px; margin: 13px 12px 0 20px; }
.controls { width: 304px; height: 34px; margin: 23px 0 0 63px; fill: none; stroke: #858585; stroke-width: 3; }
.tools { height: 103px; flex: none; display: flex; align-items: center; padding-left: 9px; }
.tool { width: 70px; height: 75px; margin-right: 2.6px; display: flex; align-items: center; justify-content: center; border-radius: 8px; flex: none; }
.tool svg { width: 40px; height: 46px; }
.tool.pencil { background: #dadada; border: 4px solid #b4b4b4; }
.tool.pencil svg { width: 44px; height: 54px; }
.tool.saveYellow svg { width: 44px; height: 52px; }
.tool.refreshGrey svg { width: 42px; height: 50px; }
.tool.newTable { margin-left: 2px; }
.tool.trash { margin-left: -2px; }
.tool.cut { margin-left: 2px; }
.tool.cut svg { width: 46px; height: 40px; }
.tool.copy svg, .tool.paste svg, .tool.trash svg { width: 36px; }
.vsep { width: 4px; height: 38px; background: #fff; border-left: 1px solid #dedede; margin: 0 9px; }
.more { width: 28px; height: 22px; margin-left: 31px; }
.form { height: 90px; flex: none; display: flex; align-items: flex-start; padding-left: 8px; }
.combo { height: 78px; margin-top: 3px; border: 4px solid #b4b4b4; border-radius: 8px; background: linear-gradient(#fff, #ececec); display: flex; align-items: center; flex: none; }
.num { font: 700 28px "Liberation Sans", sans-serif; color: #4e4e4e; }
.thin { font-family: Roboto, "Open Sans", sans-serif; font-weight: 300; font-size: 39px; color: #4a4a4a; }
.field { width: 209px; padding-left: 12px; }
.field .thin { margin-left: 13px; }
.caret { border: 11px solid transparent; border-top: 13px solid #4a4a4a; border-bottom: 0; }
.field .caret { margin-left: auto; margin-right: 19px; }
.equals { width: 35px; text-align: center; line-height: 80px; font-size: 34px; flex: none; }
.expr { width: 69px; justify-content: center; }
.expr svg { width: 38px; height: 42px; }
.value { width: 220px; margin-left: 19px; padding-left: 8px; background: #fff; }
.arrow-part { margin-left: auto; width: 57px; height: 70px; border-left: 3px solid #cacaca; background: linear-gradient(#fff, #ececec); display: flex; align-items: center; padding-left: 13px; }
.push { height: 63px; margin-top: 9px; border: 4px solid #b4b4b4; border-radius: 8px; background: linear-gradient(#fff, #ececec); display: flex; align-items: center; justify-content: center; flex: none; }
.push .thin { padding-top: 2px; }
.all { width: 198px; margin-left: 9px; padding-right: 2px; }
.sel { width: 291px; margin-left: 10px; padding-right: 4px; }
.head { width: 630px; height: 67px; flex: none; display: flex; background: linear-gradient(#fdfdfd, #ebebeb); border-bottom: 4px solid #cacaca; line-height: 72px; }
.h-id { width: 337px; border-right: 3px solid #d6d6d6; display: flex; padding-left: 156px; }
.h-name { flex: 1; display: flex; justify-content: center; }
.sort { border: 11px solid transparent; border-bottom: 13px solid #444; border-top: 0; margin: 24px 0 0 113px; height: 0; }
.body { height: 1315px; flex: none; display: flex; background: #fff; border-right: 3px solid #b8b8b8; }
.nums { width: 47px; background: #f0f0f0; flex: none; }
.rn { height: 97.8px; border-bottom: 4px solid #cdcdcd; border-right: 3px solid #cdcdcd; background: linear-gradient(90deg, #fcfcfc, #ededed); line-height: 101px; padding-left: 5px; overflow: hidden; display: flex; }
.grid { width: 584px; flex: none; }
.row { height: 97.8px; display: flex; border-bottom: 4px solid #dadada; line-height: 95px; }
.row:nth-child(even) { background: #e8e6e3; }
.c-id { width: 290px; border-right: 3px solid #dadada; display: flex; justify-content: flex-end; padding-right: 6px; }
.c-name { width: 294px; padding-left: 10px; border-right: 4px solid #dadada; display: flex; }
.row.last { background: #fff; border-bottom: 0; align-items: flex-start; }
.last .c-id { width: 288px; height: 95px; margin: 1px 5px 0 0; background: #0078d7; color: #dfe8fb; padding-right: 6px; line-height: 93px; border: 0; }
.null { width: 291px; height: 103px; margin-top: 1px; flex: none; border: 14px solid #f00; background: #0078d7; color: #fff; font: 46px/78px "Liberation Sans", Arial, sans-serif; padding-left: 24px; }
.foot { height: 97px; flex: none; display: flex; justify-content: space-between; padding: 12px 9px 0 8px; }
.filter { width: 372px; height: 75px; border: 4px solid #b4b4b4; border-radius: 8px; background: linear-gradient(#fff, #ececec); display: flex; align-items: center; padding-left: 7px; }
.filter svg, .views svg { width: 39px; height: 45px; }
.filter .thin { margin-left: 8px; padding-top: 4px; }
.small { border-width: 11px 8px 0; margin: 42px 0 0 25px; }
.views { display: flex; align-items: center; gap: 16px; height: 75px; }
.view-on { width: 69px; height: 75px; border: 4px solid #b4b4b4; border-radius: 8px; background: #dadada; display: flex; align-items: center; justify-content: center; }
.strip { height: 4px; flex: none; display: flex; background: #9a9a9a; }
.green { width: 409px; background: #2f8049; }
.red { background: #8d2416; }
.one { width: 16px; margin-left: 281px; }
.two { width: 26px; margin-left: 300px; background: #5e0d12; }

.pointer { position: absolute; left: 1155px; top: 610px; width: 640px; height: 460px; }
</style>
